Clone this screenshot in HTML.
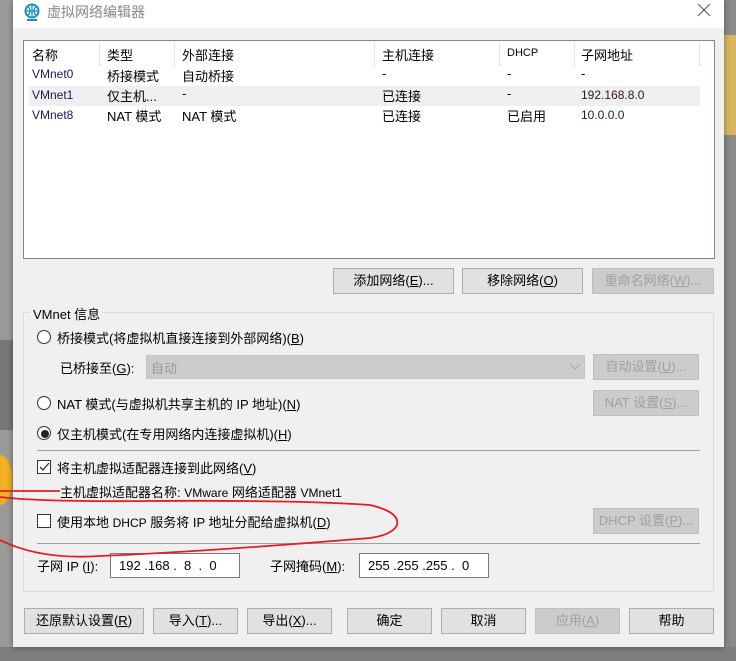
<!DOCTYPE html>
<html><head><meta charset="utf-8"><style>
*{margin:0;padding:0;box-sizing:border-box}
body{width:736px;height:661px;position:relative;overflow:hidden;background:#8a8a8a;font-family:"Liberation Sans","Noto Sans CJK SC",sans-serif;font-size:13px;color:#000}
.a{position:absolute;white-space:nowrap}
#dlg{position:absolute;left:13px;top:0;width:711px;height:647px;background:#f0f0f0;box-shadow:0 0 6px rgba(0,0,0,.4)}
#title{position:absolute;left:13px;top:0;width:711px;height:28px;background:#fff}
.btn{position:absolute;height:26px;background:#e1e1e1;border:1px solid #adadad;text-align:center;line-height:24px;font-size:13px}
.dis{color:#a0a0a0;background:#cccccc;border-color:#bfbfbf}
.rad{position:absolute;width:14px;height:14px;border:1px solid #333;border-radius:50%;background:#fff}
.chk{position:absolute;width:14px;height:14px;border:1px solid #333;background:#fff}
.vl{position:absolute;top:42px;height:24px;width:1px;background:#e5e5e5}
.inp{position:absolute;height:25px;background:#fff;border:1px solid #7a7a7a;font-size:13px;line-height:23px;padding-left:8px}
</style></head><body>
<div class="a" style="left:0;top:0;width:13px;height:661px;background:#9a9a9a"></div>
<div class="a" style="left:0;top:340px;width:13px;height:90px;background:#777"></div>
<div class="a" style="left:-12px;top:455px;width:24px;height:50px;border-radius:50%;background:#f0b020"></div>
<div class="a" style="left:724px;top:35px;width:12px;height:100px;background:#d9b560"></div>
<div class="a" style="left:0;top:647px;width:736px;height:14px;background:#7e7e7e"></div>
<div id="dlg"></div>
<div id="title"></div>
<svg class="a" style="left:23px;top:3px" width="18" height="20" viewBox="0 0 18 20"><circle cx="9" cy="8" r="6.5" fill="none" stroke="#1a8fc0" stroke-width="2"/><path d="M2.5 8h13M9 1.5v13M5 3.5q4 4.5 0 9M13 3.5q-4 4.5 0 9" stroke="#1a8fc0" stroke-width="1.3" fill="none"/><rect x="4" y="16" width="10" height="2" fill="#1a8fc0"/></svg>
<div class="a" style="left:47px;top:2px;font-size:14px;color:#888">虚拟网络编辑器</div>
<svg class="a" style="left:697px;top:3px" width="14" height="14"><path d="M1 1L13 13M13 1L1 13" stroke="#555" stroke-width="1"/></svg>

<div class="a" style="left:23px;top:40px;width:692px;height:219px;background:#fff;border:1px solid #828790"></div>
<div class="vl" style="left:99px"></div><div class="vl" style="left:174px"></div><div class="vl" style="left:374px"></div><div class="vl" style="left:499px"></div><div class="vl" style="left:574px"></div><div class="vl" style="left:699px"></div>
<div class="a" style="left:32px;top:45px">名称</div>
<div class="a" style="left:107px;top:45px">类型</div>
<div class="a" style="left:182px;top:45px">外部连接</div>
<div class="a" style="left:382px;top:45px">主机连接</div>
<div class="a" style="left:507px;top:47px;font-size:11px">DHCP</div>
<div class="a" style="left:581px;top:45px">子网地址</div>
<div class="a" style="left:29px;top:86px;width:671px;height:20px;background:#efefef"></div>
<div class="a" style="left:32px;top:67px;color:#1a1a50;font-size:12px">VMnet0</div>
<div class="a" style="left:107px;top:66px">桥接模式</div><div class="a" style="left:182px;top:66px">自动桥接</div>
<div class="a" style="left:382px;top:66px">-</div><div class="a" style="left:507px;top:66px">-</div><div class="a" style="left:581px;top:66px">-</div>
<div class="a" style="left:32px;top:88px;color:#1a1a50;font-size:12px">VMnet1</div>
<div class="a" style="left:107px;top:86px">仅主机...</div><div class="a" style="left:182px;top:86px">-</div>
<div class="a" style="left:382px;top:86px">已连接</div><div class="a" style="left:507px;top:86px">-</div><div class="a" style="left:581px;top:88px;color:#301818;font-size:12px">192.168.8.0</div>
<div class="a" style="left:32px;top:108px;color:#1a1a50;font-size:12px">VMnet8</div>
<div class="a" style="left:107px;top:106px">NAT 模式</div><div class="a" style="left:182px;top:106px">NAT 模式</div>
<div class="a" style="left:382px;top:106px">已连接</div><div class="a" style="left:507px;top:106px">已启用</div><div class="a" style="left:581px;top:108px;color:#301818;font-size:12px">10.0.0.0</div>

<div class="btn" style="left:333px;top:268px;width:121px">添加网络(<u>E</u>)...</div>
<div class="btn" style="left:462px;top:268px;width:121px">移除网络(<u>O</u>)</div>
<div class="btn dis" style="left:592px;top:268px;width:122px">重命名网络(<u>W</u>)...</div>

<div class="a" style="left:23px;top:312px;width:691px;height:280px;border:1px solid #dcdcdc"></div>
<div class="a" style="left:30px;top:304px;background:#f0f0f0;padding:0 3px">VMnet 信息</div>

<div class="rad" style="left:37px;top:330px"></div>
<div class="a" style="left:57px;top:328px">桥接模式(将虚拟机直接连接到外部网络)(<u>B</u>)</div>
<div class="a" style="left:60px;top:358px">已桥接至(<u>G</u>):</div>
<div class="a" style="left:146px;top:355px;width:439px;height:24px;background:#cccccc;border:1px solid #c4c4c4;color:#999;padding:2px 4px">自动</div>
<svg class="a" style="left:570px;top:364px" width="10" height="6"><path d="M0 0L5 5L10 0" stroke="#aaa" fill="none"/></svg>
<div class="btn dis" style="left:593px;top:354px;width:106px">自动设置(<u>U</u>)...</div>

<div class="rad" style="left:37px;top:396px"></div>
<div class="a" style="left:57px;top:394px">NAT 模式(与虚拟机共享主机的 IP 地址)(<u>N</u>)</div>
<div class="btn dis" style="left:593px;top:390px;width:106px">NAT 设置(<u>S</u>)...</div>

<div class="rad" style="left:37px;top:426px"></div>
<div class="a" style="left:41px;top:430px;width:8px;height:8px;border-radius:50%;background:#222"></div>
<div class="a" style="left:57px;top:424px">仅主机模式(在专用网络内连接虚拟机)(<u>H</u>)</div>
<div class="a" style="left:37px;top:450px;width:663px;height:1px;background:#a0a0a0"></div>

<div class="chk" style="left:37px;top:460px"></div>
<svg class="a" style="left:39px;top:462px" width="11" height="10"><path d="M1 5L4 8L10 1" stroke="#333" stroke-width="1.3" fill="none"/></svg>
<div class="a" style="left:57px;top:458px">将主机虚拟适配器连接到此网络(<u>V</u>)</div>
<div class="a" style="left:60px;top:482px">主机虚拟适配器名称: <span style="font-size:12px">VMware</span> 网络适配器 <span style="font-size:12px">VMnet1</span></div>

<div class="chk" style="left:37px;top:514px"></div>
<div class="a" style="left:57px;top:512px">使用本地 <span style="font-size:12px">DHCP</span> 服务将 IP 地址分配给虚拟机(<u>D</u>)</div>
<div class="btn dis" style="left:593px;top:508px;width:106px">DHCP 设置(<u>P</u>)...</div>
<div class="a" style="left:37px;top:543px;width:663px;height:1px;background:#a0a0a0"></div>

<div class="a" style="left:37px;top:556px">子网 IP (<u>I</u>):</div>
<div class="inp" style="left:110px;top:553px;width:130px">192 .168 .&nbsp; 8&nbsp; .&nbsp; 0</div>
<div class="a" style="left:270px;top:556px">子网掩码(<u>M</u>):</div>
<div class="inp" style="left:359px;top:553px;width:130px">255 .255 .255 .&nbsp; 0</div>

<div class="btn" style="left:24px;top:608px;width:120px">还原默认设置(<u>R</u>)</div>
<div class="btn" style="left:153px;top:608px;width:85px">导入(<u>T</u>)...</div>
<div class="btn" style="left:247px;top:608px;width:85px">导出(<u>X</u>)...</div>
<div class="btn" style="left:347px;top:608px;width:85px">确定</div>
<div class="btn" style="left:441px;top:608px;width:85px">取消</div>
<div class="btn dis" style="left:535px;top:608px;width:85px">应用(<u>A</u>)</div>
<div class="btn" style="left:629px;top:608px;width:85px">帮助</div>

<svg class="a" style="left:0;top:480px" width="420" height="90"><path d="M0 11L60 11M0 17Q40 22 150 21Q300 20 370 25Q400 32 397 45Q392 55 370 58Q200 72 100 76Q40 80 0 60" stroke="#e51c23" stroke-width="1.8" fill="none"/></svg>
</body></html>
